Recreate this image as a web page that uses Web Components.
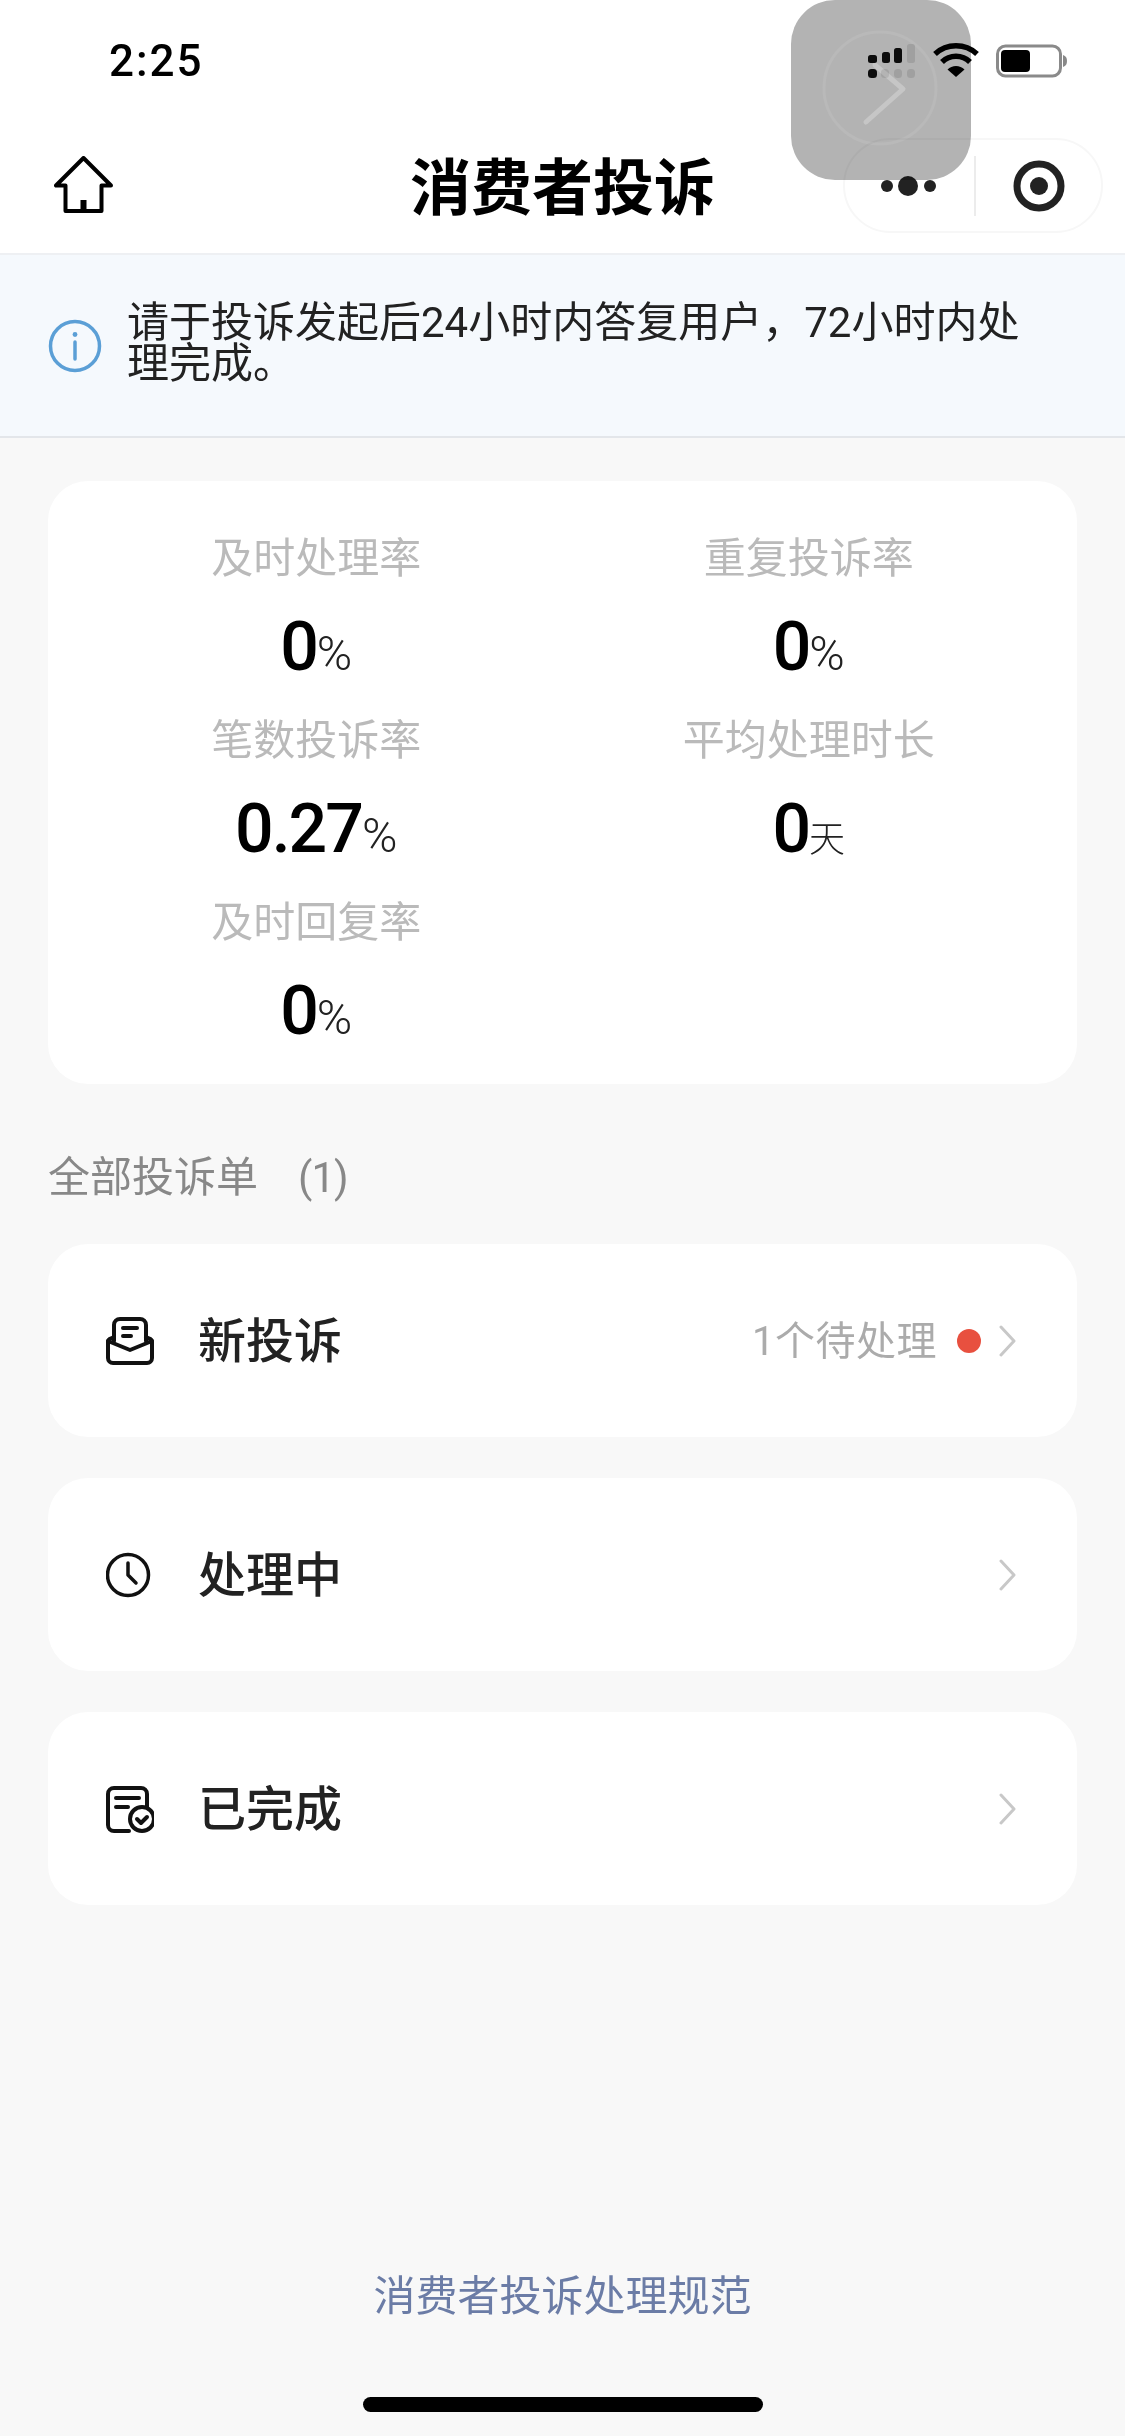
<!DOCTYPE html>
<html lang="zh">
<head>
<meta charset="utf-8">
<title>消费者投诉</title>
<style>
	html, body {
		margin: 0;
		padding: 0;
		background: #f8f8f8;
		font-family: Roboto, "Noto Sans CJK SC", sans-serif;
	}
</style>
</head>
<body>
<template id="status-bar-tpl">
	<style>
		:host {
			display: flex;
			align-items: flex-start;
			justify-content: space-between;
			height: 138px;
			padding: 38px 58px 0 109px;
			box-sizing: border-box;
		}
		.time {
			font: 500 44px/46px Roboto, sans-serif;
			letter-spacing: 2px;
			color: #000;
		}
		.icons {
			display: flex;
			align-items: flex-start;
			margin-top: 5px;
		}
		svg { display: block; }
	</style>
	<div class="time">2:25</div>
	<div class="icons">
		<svg width="199" height="36" viewBox="868 43 199 36">
			<rect x="868" y="55" width="9" height="8" rx="2.5" fill="#111"/>
			<rect x="882" y="52" width="8" height="11" rx="2.5" fill="#111"/>
			<rect x="894" y="48" width="8" height="15" rx="2.5" fill="#111"/>
			<rect x="907" y="44" width="8" height="19" rx="2.5" fill="#e4e4e4"/>
			<rect x="868" y="69" width="9" height="9" rx="3.5" fill="#111"/>
			<rect x="881" y="69" width="8" height="9" rx="3.5" fill="#e8e8e8"/>
			<rect x="894" y="69" width="8" height="9" rx="3.5" fill="#e4e4e4"/>
			<rect x="907" y="69" width="8" height="9" rx="3.5" fill="#e4e4e4"/>
			<path d="M935 54a31 31 0 0 1 42 0" fill="none" stroke="#000" stroke-width="5.5"/>
			<path d="M942 62a20 20 0 0 1 28 0" fill="none" stroke="#000" stroke-width="5.5"/>
			<path d="M947.5 69.5a12 12 0 0 1 17 0L956 77z" fill="#000"/>
			<rect x="997.5" y="46" width="63" height="30" rx="8" fill="#fff" stroke="#8a8a8a" stroke-width="3"/>
			<rect x="1001" y="50" width="29" height="22" rx="4" fill="#000"/>
			<path d="M1063 55c3 1 4 3 4 6s-1 5-4 6z" fill="#888"/>
		</svg>
	</div>
</template>

<template id="nav-bar-tpl">
	<style>
		:host {
			display: grid;
			grid-template-columns: 1fr auto 1fr;
			align-items: center;
			height: 115px;
			padding: 0 22px 0 54px;
			box-sizing: border-box;
		}
		.back { display: block; margin-top: -21px; }
		.title {
			font: 700 61px/1 "Noto Sans CJK SC", sans-serif;
			color: #000;
			margin-top: -25px;
			position: relative;
			left: -16px;
		}
		.capsule {
			justify-self: end;
			display: flex;
			align-items: center;
			width: 260px;
			height: 95px;
			margin-top: -20px;
			border: 2px solid #f7f7f7;
			border-radius: 48px;
			box-sizing: border-box;
		}
		.capsule > div {
			display: flex;
			align-items: center;
			justify-content: center;
			height: 60px;
			box-sizing: border-box;
		}
		.capsule > div:first-child { flex: none; width: 129px; padding-left: 9px; }
		.capsule > div + div { flex: 1; border-left: 2px solid #ececec; }
	</style>
	<svg class="back" width="60" height="58" viewBox="0 0 60 58" fill="none" stroke="#000" stroke-width="4" stroke-linejoin="round">
		<path d="M29.500 2 2 29.500h9.500V55h36V29.500H57z"/>
		<rect x="26.500" y="44" width="6" height="11" fill="#000" stroke="none"/>
	</svg>
	<div class="title"><slot></slot></div>
	<div class="capsule">
		<div>
			<svg width="70" height="24" viewBox="0 0 70 24" fill="#222"><circle cx="8" cy="12" r="6"/><circle cx="29" cy="12" r="10"/><circle cx="51" cy="12" r="6"/></svg>
		</div>
		<div>
			<svg width="52" height="52" viewBox="0 0 52 52"><circle cx="26" cy="26" r="22" fill="none" stroke="#222" stroke-width="7"/><circle cx="26" cy="26" r="9" fill="#222"/></svg>
		</div>
	</div>
</template>

<template id="float-box-tpl">
	<style>
		:host {
			position: absolute;
			left: 791px;
			top: 0;
			width: 180px;
			height: 180px;
			border-radius: 44px;
			background: #b3b3b3;
			mix-blend-mode: multiply;
		}
		svg { display: block; }
	</style>
	<svg width="180" height="180" viewBox="0 0 180 180" fill="none">
		<circle cx="89" cy="88" r="56" stroke="#b9b9b9" stroke-width="3"/>
		<path d="M84 65 112 89 75 122" stroke="#c6c6c6" stroke-width="5" stroke-linecap="round" stroke-linejoin="round"/>
	</svg>
</template>

<template id="notice-bar-tpl">
	<style>
		:host {
			display: flex;
			align-items: center;
			gap: 25px;
			height: 185px;
			padding: 0 90px 0 48px;
			box-sizing: border-box;
			background: #f5f9fd;
			border-top: 2px solid #eef0f3;
			border-bottom: 2px solid #e3e6ea;
			font-size: 42px;
			line-height: 41px;
			color: #222;
		}
		svg { flex: none; }
		.text { position: relative; top: -3px; }
	</style>
	<svg width="54" height="54" viewBox="0 0 54 54" fill="none" stroke="#5b9fd6">
		<circle cx="27" cy="27" r="24.5" stroke-width="3.5"/>
		<path d="M27 23v17" stroke-width="3.5" stroke-linecap="round"/>
		<circle cx="27" cy="15.500" r="2.400" fill="#5b9fd6" stroke="none"/>
	</svg>
	<div class="text"><slot></slot></div>
</template>

<template id="stat-card-tpl">
	<style>
		:host {
			display: grid;
			grid-template-columns: 1fr 1fr;
			grid-auto-rows: 182px;
			margin: 43px 48px 0;
			padding: 30px 22px 27px;
			background: #fff;
			border-radius: 40px;
		}
	</style>
	<slot></slot>
</template>

<template id="stat-item-tpl">
	<style>
		:host {
			display: flex;
			flex-direction: column;
			align-items: center;
		}
		.label {
			height: 91px;
			font-size: 42px;
			line-height: 96px;
			color: #bababa;
		}
		.value {
			display: flex;
			align-items: baseline;
			height: 91px;
			font: 500 68px/91px Roboto, sans-serif;
			letter-spacing: -2px;
			color: #000;
		}
		.unit {
			font: 300 48px/91px Roboto, "Noto Sans CJK SC", sans-serif;
			letter-spacing: 0;
			color: #222;
		}
		:host([unit="天"]) .unit { font-size: 36px; }
	</style>
	<div class="label"></div>
	<div class="value"><span class="num"></span><span class="unit"></span></div>
</template>

<template id="section-title-tpl">
	<style>
		:host {
			display: block;
			margin: 63px 48px 35px;
			font-size: 42px;
			line-height: 62px;
			color: #888;
		}
		.count { margin-left: 40px; letter-spacing: -1px; }
	</style>
	<slot></slot><span class="count"></span>
</template>

<template id="menu-row-tpl">
	<style>
		:host {
			display: flex;
			align-items: center;
			height: 193px;
			margin: 0 48px 41px;
			padding: 0 60px 0 58px;
			box-sizing: border-box;
			background: #fff;
			border-radius: 40px;
		}
		.icon { display: flex; width: 48px; height: 48px; flex: none; }
		.label {
			margin: -8px 0 0 44px;
			flex: 1;
			font-size: 48px;
			font-weight: 500;
			color: #222;
		}
		.chev { flex: none; margin-left: 18px; }
	</style>
	<div class="icon"><slot name="icon"></slot></div>
	<div class="label"></div>
	<slot name="extra"></slot>
	<svg class="chev" width="18" height="32" viewBox="0 0 18 32" fill="none" stroke="#c8c8c8" stroke-width="3" stroke-linecap="round" stroke-linejoin="round"><path d="M2 2 15 16 2 30"/></svg>
</template>

<template id="pending-tag-tpl">
	<style>
		:host {
			display: flex;
			align-items: center;
			gap: 20px;
			font-size: 40px;
			letter-spacing: .5px;
			color: #ababab;
		}
		span { margin-top: -6px; }
		i {
			width: 24px;
			height: 24px;
			border-radius: 50%;
			background: #e8503f;
		}
	</style>
	<span><slot></slot></span><i></i>
</template>

<template id="page-foot-tpl">
	<style>
		:host {
			display: flex;
			flex-direction: column;
			align-items: center;
			margin-top: auto;
			padding-bottom: 24px;
		}
		.link {
			font-size: 42px;
			line-height: 60px;
			color: #6b7ca6;
		}
		.home {
			width: 400px;
			height: 15px;
			margin-top: 70px;
			border-radius: 8px;
			background: #000;
		}
	</style>
	<div class="link"><slot></slot></div>
	<div class="home"></div>
</template>

<app-page>
	<page-head>
		<status-bar></status-bar>
		<nav-bar>消费者投诉</nav-bar>
		<float-box></float-box>
	</page-head>
	<notice-bar>请于投诉发起后24小时内答复用户，72小时内处理完成。</notice-bar>
	<stat-card>
		<stat-item label="及时处理率" num="0" unit="%"></stat-item>
		<stat-item label="重复投诉率" num="0" unit="%"></stat-item>
		<stat-item label="笔数投诉率" num="0.27" unit="%"></stat-item>
		<stat-item label="平均处理时长" num="0" unit="天"></stat-item>
		<stat-item label="及时回复率" num="0" unit="%"></stat-item>
	</stat-card>
	<section-title count="(1)">全部投诉单</section-title>
	<menu-row label="新投诉">
		<svg slot="icon" width="48" height="48" viewBox="0 0 48 48" fill="none" stroke="#111" stroke-width="4" stroke-linejoin="round" stroke-linecap="round">
			<path d="M8 24V8a6 6 0 0 1 6-6h20a6 6 0 0 1 6 6v16"/>
			<path d="M8 20l-3 1.500a4 4 0 0 0-3 4V41a5 5 0 0 0 5 5h34a5 5 0 0 0 5-5V25.500a4 4 0 0 0-3-4L40 20"/>
			<path d="M2 24l22 9 22-9"/>
			<path d="M17 11h14M17 19h8"/>
		</svg>
		<pending-tag slot="extra">1个待处理</pending-tag>
	</menu-row>
	<menu-row label="处理中">
		<svg slot="icon" width="48" height="48" viewBox="0 0 48 48" fill="none" stroke="#111" stroke-width="3.500" stroke-linecap="round" stroke-linejoin="round">
			<circle cx="22" cy="24" r="20.500"/>
			<path d="M22 12v12l8 8"/>
		</svg>
	</menu-row>
	<menu-row label="已完成">
		<svg slot="icon" width="48" height="48" viewBox="0 0 48 48" fill="none" stroke="#111" stroke-width="4" stroke-linecap="round" stroke-linejoin="round">
			<path d="M23 46H8a6 6 0 0 1-6-6V9a6 6 0 0 1 6-6h27a6 6 0 0 1 6 6v13"/>
			<path d="M10 13h23M10 22h12"/>
			<circle cx="36" cy="34" r="12" fill="#fff"/>
			<path d="M31 34l4 4 6-6"/>
		</svg>
	</menu-row>
	<page-foot>消费者投诉处理规范</page-foot>
</app-page>

<script>
	class BaseEl extends HTMLElement {
		constructor () {
			super();
			const tpl = document.getElementById(this.localName + '-tpl');
			this.attachShadow({ mode: 'open' });
			if (tpl) this.shadowRoot.append(tpl.content.cloneNode(true));
		}
	}

	class AppPage extends HTMLElement {
		constructor () {
			super();
			this.attachShadow({ mode: 'open' });
			this.shadowRoot.innerHTML = `
				<style>
					:host {
						position: relative;
						display: flex;
						flex-direction: column;
						width: 1125px;
						height: 2436px;
						overflow: hidden;
						background: #f8f8f8;
					}
				</style>
				<slot></slot>
			`;
		}
	}

	class PageHead extends HTMLElement {
		constructor () {
			super();
			this.attachShadow({ mode: 'open' });
			this.shadowRoot.innerHTML = `
				<style>
					:host { display: block; background: #fff; }
				</style>
				<slot></slot>
			`;
		}
	}

	class StatItem extends BaseEl {
		connectedCallback () {
			const root = this.shadowRoot;
			root.querySelector('.label').textContent = this.getAttribute('label');
			root.querySelector('.num').textContent = this.getAttribute('num');
			root.querySelector('.unit').textContent = this.getAttribute('unit');
		}
	}

	class SectionTitle extends BaseEl {
		connectedCallback () {
			this.shadowRoot.querySelector('.count').textContent = this.getAttribute('count');
		}
	}

	class MenuRow extends BaseEl {
		connectedCallback () {
			this.shadowRoot.querySelector('.label').textContent = this.getAttribute('label');
		}
	}

	customElements.define('app-page', AppPage);
	customElements.define('page-head', PageHead);
	customElements.define('status-bar', class extends BaseEl {});
	customElements.define('nav-bar', class extends BaseEl {});
	customElements.define('float-box', class extends BaseEl {});
	customElements.define('notice-bar', class extends BaseEl {});
	customElements.define('stat-card', class extends BaseEl {});
	customElements.define('stat-item', StatItem);
	customElements.define('section-title', SectionTitle);
	customElements.define('menu-row', MenuRow);
	customElements.define('pending-tag', class extends BaseEl {});
	customElements.define('page-foot', class extends BaseEl {});
</script>
</body>
</html>
